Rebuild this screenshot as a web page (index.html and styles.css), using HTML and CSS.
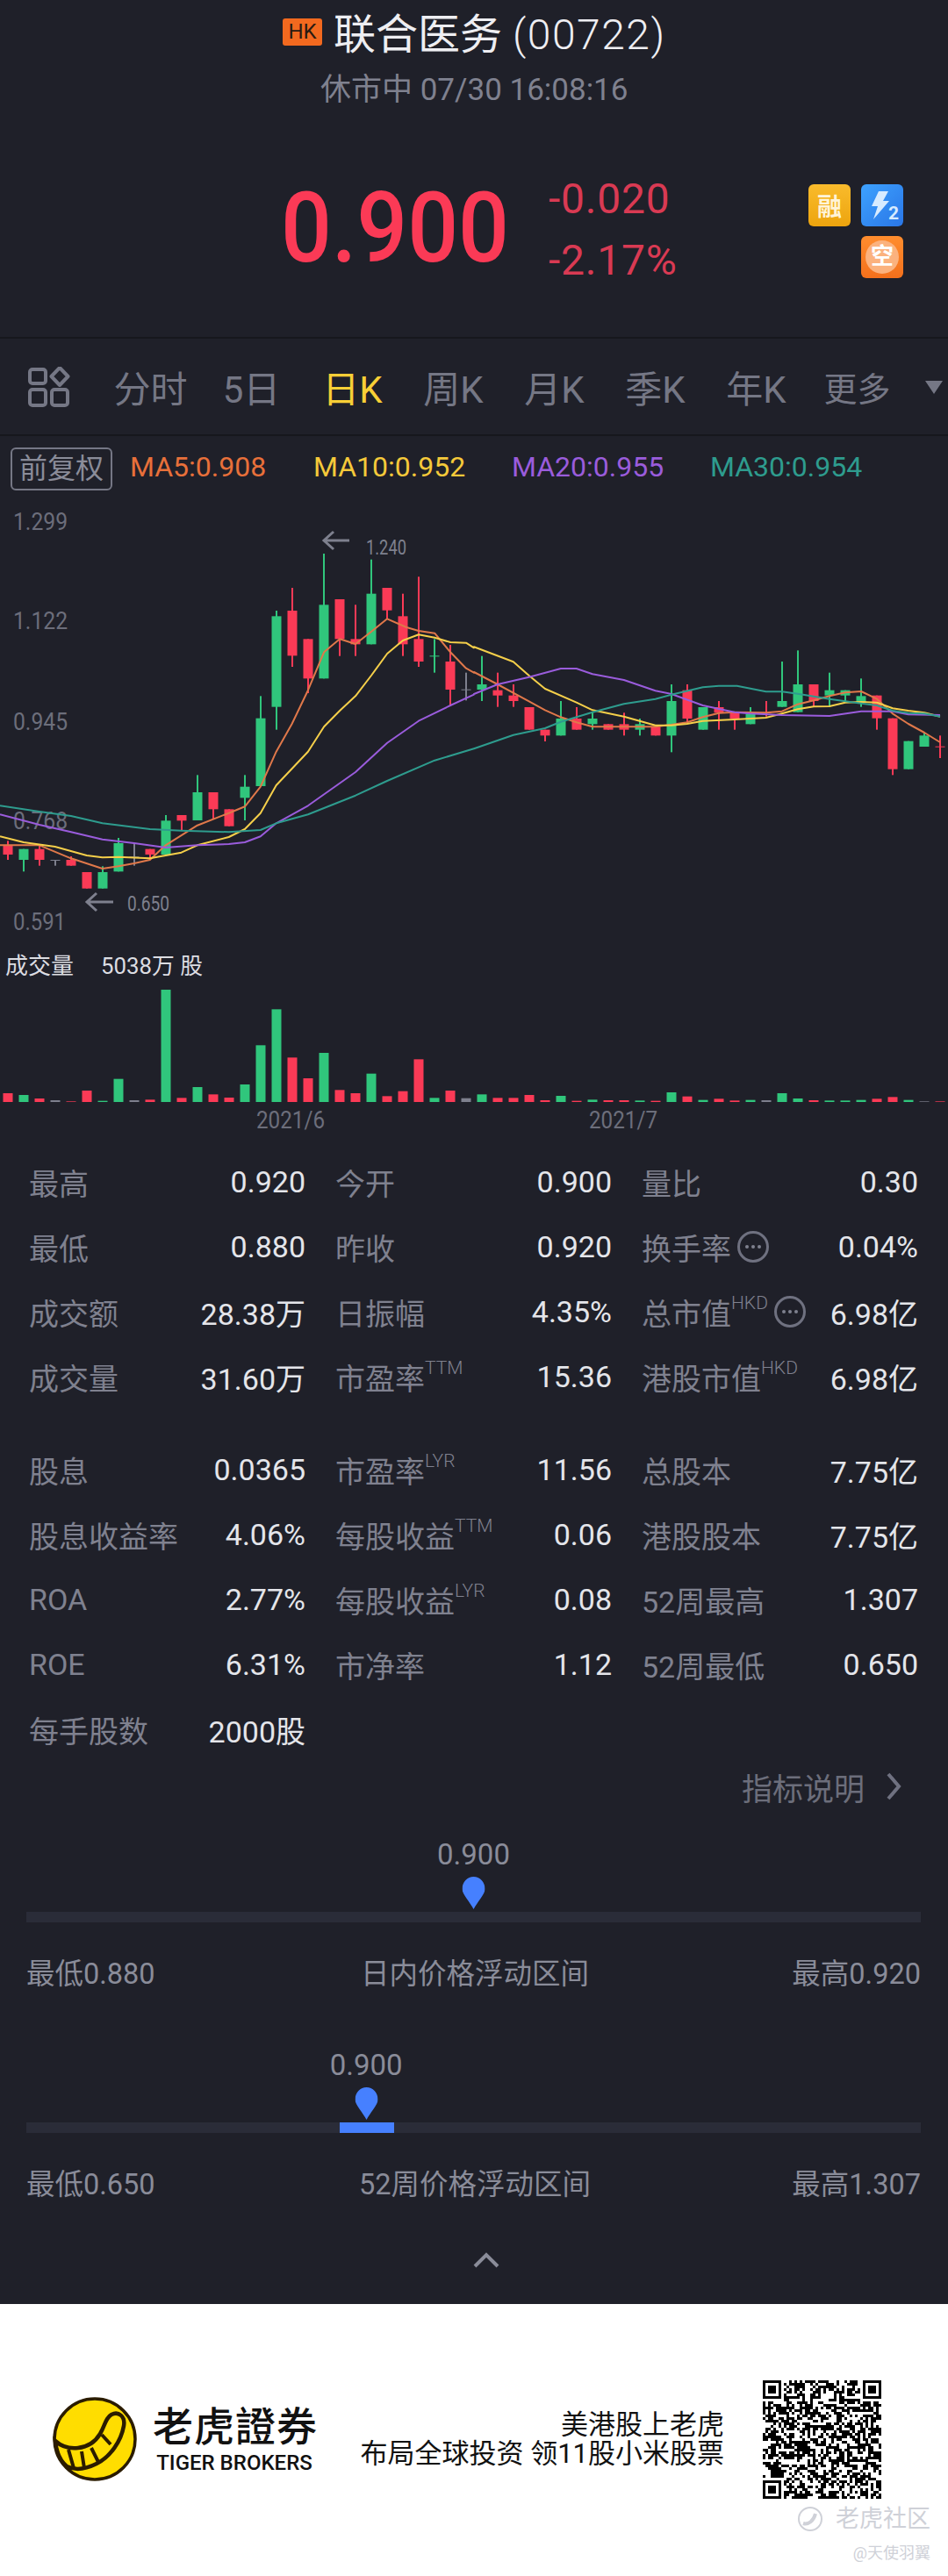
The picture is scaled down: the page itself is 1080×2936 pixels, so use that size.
FILE: index.html
```html
<!DOCTYPE html>
<html lang="zh-CN">
<head>
  <meta charset="UTF-8">
  <meta name="viewport" content="width=device-width, initial-scale=1.0">
  <title>联合医务 (00722)</title>
  <link rel="stylesheet" href="styles.css">
</head>
<body>
  <div class="quote">
    <div class="title-row">
      <span class="market">HK</span>
      <span class="title">联合医务 <span class="title-code">(00722)</span></span>
    </div>
    <div class="status">休市中 07/30 16:08:16</div>
    <div class="price-row">
      <div class="price"><span>0.900</span></div>
      <div class="change">
        <div>-0.020</div>
        <div>-2.17%</div>
      </div>
      <div class="badges">
        <span class="badge badge-rong">融</span>
        <span class="badge badge-blue">
          <svg width="48" height="48" viewBox="0 0 48 48">
            <path d="M20 8h11l-6 11h7L14 40l5-15h-7z" fill="#d7ebff"/>
            <text x="31" y="40" class="badge-two">2</text>
          </svg>
        </span>
        <span class="badge-blank"></span>
        <span class="badge badge-short"><span class="short-ring">空</span></span>
      </div>
    </div>
  </div>

  <div class="tabs">
    <div class="tabs-icon">
      <svg width="48" height="46" viewBox="0 0 48 46" fill="none" stroke="#757785" stroke-width="4">
        <rect x="2" y="3" width="18" height="16" rx="3"/>
        <path d="M36 1l9.500 10L36 21l-9.500-10z" stroke-linejoin="round"/>
        <rect x="2" y="26" width="18" height="18" rx="3"/>
        <rect x="27" y="26" width="18" height="18" rx="3"/>
      </svg>
    </div>
    <div class="tab">分时</div>
    <div class="tab">5日</div>
    <div class="tab tab-on">日K</div>
    <div class="tab">周K</div>
    <div class="tab">月K</div>
    <div class="tab">季K</div>
    <div class="tab">年K</div>
    <div class="tab tab-more">更多</div>
    <div class="tab-caret"></div>
  </div>

  <div class="ma-row">
    <span class="adjust">前复权</span>
    <span class="ma ma5">MA5:0.908</span>
    <span class="ma ma10">MA10:0.952</span>
    <span class="ma ma20">MA20:0.955</span>
    <span class="ma ma30">MA30:0.954</span>
  </div>

  <svg class="chart" width="1080" height="750" viewBox="0 0 1080 750">
    <g class="axis">
      <text x="15" y="44" textLength="62" lengthAdjust="spacingAndGlyphs">1.299</text>
      <text x="15" y="157" textLength="62" lengthAdjust="spacingAndGlyphs">1.122</text>
      <text x="15" y="272" textLength="62" lengthAdjust="spacingAndGlyphs">0.945</text>
      <text x="15" y="385" textLength="62" lengthAdjust="spacingAndGlyphs">0.768</text>
      <text x="15" y="500" textLength="60" lengthAdjust="spacingAndGlyphs">0.591</text>
    </g>
    <g id="candles"></g>
    <g id="lines" fill="none" stroke-width="2"></g>
    <g class="peak">
      <path d="M398 56H369M380 46l-11 10 11 10"/>
      <path d="M129 468H99M110 458l-11 10 11 10"/>
    </g>
    <text x="417" y="72" class="peak-label" textLength="46" lengthAdjust="spacingAndGlyphs">1.240</text>
    <text x="145" y="478" class="peak-label" textLength="48" lengthAdjust="spacingAndGlyphs">0.650</text>
    <text x="6" y="550" class="vol-label">成交量</text>
    <text x="115" y="550" class="vol-label" textLength="116" lengthAdjust="spacingAndGlyphs">5038万 股</text>
    <g id="volume"></g>
    <text x="292" y="726" class="date" textLength="78" lengthAdjust="spacingAndGlyphs">2021/6</text>
    <text x="671" y="726" class="date" textLength="78" lengthAdjust="spacingAndGlyphs">2021/7</text>
  </svg>

  <div class="stats">
    <div class="cell"><span class="lbl">最高</span><span class="val">0.920</span></div>
    <div class="cell"><span class="lbl">今开</span><span class="val">0.900</span></div>
    <div class="cell"><span class="lbl">量比</span><span class="val">0.30</span></div>
    <div class="cell"><span class="lbl">最低</span><span class="val">0.880</span></div>
    <div class="cell"><span class="lbl">昨收</span><span class="val">0.920</span></div>
    <div class="cell"><span class="lbl">换手率<i class="more"></i></span><span class="val">0.04%</span></div>
    <div class="cell"><span class="lbl">成交额</span><span class="val">28.38万</span></div>
    <div class="cell"><span class="lbl">日振幅</span><span class="val">4.35%</span></div>
    <div class="cell"><span class="lbl">总市值<sup>HKD</sup><i class="more"></i></span><span class="val">6.98亿</span></div>
    <div class="cell"><span class="lbl">成交量</span><span class="val">31.60万</span></div>
    <div class="cell"><span class="lbl">市盈率<sup>TTM</sup></span><span class="val">15.36</span></div>
    <div class="cell"><span class="lbl">港股市值<sup>HKD</sup></span><span class="val">6.98亿</span></div>
  </div>
  <div class="stats stats-second">
    <div class="cell"><span class="lbl">股息</span><span class="val">0.0365</span></div>
    <div class="cell"><span class="lbl">市盈率<sup>LYR</sup></span><span class="val">11.56</span></div>
    <div class="cell"><span class="lbl">总股本</span><span class="val">7.75亿</span></div>
    <div class="cell"><span class="lbl">股息收益率</span><span class="val">4.06%</span></div>
    <div class="cell"><span class="lbl">每股收益<sup>TTM</sup></span><span class="val">0.06</span></div>
    <div class="cell"><span class="lbl">港股股本</span><span class="val">7.75亿</span></div>
    <div class="cell"><span class="lbl">ROA</span><span class="val">2.77%</span></div>
    <div class="cell"><span class="lbl">每股收益<sup>LYR</sup></span><span class="val">0.08</span></div>
    <div class="cell"><span class="lbl">52周最高</span><span class="val">1.307</span></div>
    <div class="cell"><span class="lbl">ROE</span><span class="val">6.31%</span></div>
    <div class="cell"><span class="lbl">市净率</span><span class="val">1.12</span></div>
    <div class="cell"><span class="lbl">52周最低</span><span class="val">0.650</span></div>
    <div class="cell"><span class="lbl">每手股数</span><span class="val">2000股</span></div>
  </div>

  <div class="explain">
    <span>指标说明</span>
    <svg width="18" height="34" viewBox="0 0 18 34" fill="none" stroke="#6f7180" stroke-width="4"><path d="M3 3l12 14L3 31"/></svg>
  </div>

  <div class="range">
    <div class="range-marker">
      <div class="range-now" style="left: 50%">
        <span>0.900</span>
        <svg width="26" height="37" viewBox="0 0 26 37"><path d="M13 0c7 0 13 6 13 14 0 6-9 15-13 23C9 29 0 20 0 14 0 6 6 0 13 0z" fill="#4680ff"/></svg>
      </div>
    </div>
    <div class="range-track"></div>
    <div class="range-labels"><span>最低0.880</span><span class="range-name">日内价格浮动区间</span><span>最高0.920</span></div>
  </div>

  <div class="range">
    <div class="range-marker">
      <div class="range-now" style="left: 38%">
        <span>0.900</span>
        <svg width="26" height="37" viewBox="0 0 26 37"><path d="M13 0c7 0 13 6 13 14 0 6-9 15-13 23C9 29 0 20 0 14 0 6 6 0 13 0z" fill="#4680ff"/></svg>
      </div>
    </div>
    <div class="range-track"><div class="range-fill" style="left: 35%; width: 6.100%"></div></div>
    <div class="range-labels"><span>最低0.650</span><span class="range-name">52周价格浮动区间</span><span>最高1.307</span></div>
  </div>

  <div class="collapse">
    <svg width="30" height="18" viewBox="0 0 30 18" fill="none" stroke="#8a8c99" stroke-width="4"><path d="M2 16L15 3l13 13"/></svg>
  </div>

  <div class="promo">
    <svg class="logo" width="96" height="96" viewBox="0 0 96 96">
      <circle cx="48" cy="48" r="46" fill="#ffdd00" stroke="#2b1c00" stroke-width="3.500"/>
      <path d="M3 50C16 62 42 62 54 42 60 32 60 24 67 20c8-4 16 2 14 13C78 50 66 68 50 76 38 82 26 84 16 79 8 72 4 62 3 50z" fill="#ffdd00" stroke="#2b1c00" stroke-width="4.500"/>
      <path d="M18 60l6 21M33 62l3 19M44 58l9 18M56 43l10 11" stroke="#2b1c00" stroke-width="4" fill="none"/>
    </svg>
    <div class="brand">
      <div class="brand-cn">老虎證券</div>
      <div class="brand-en">TIGER BROKERS</div>
    </div>
    <div class="promo-text">
      <div>美港股上老虎</div>
      <div>布局全球投资 领11股小米股票</div>
    </div>
    <svg id="qr" class="qr" width="135" height="135" viewBox="0 0 45 45" shape-rendering="crispEdges"></svg>
    <div class="watermark">
      <div class="wm-main">
        <svg width="30" height="32" viewBox="0 0 30 32" fill="none" stroke="#cfd1d8" stroke-width="2"><circle cx="15" cy="16" r="13"/><path d="M7 21c6 2 12-3 14-11" stroke-width="4"/></svg>
        <span>老虎社区</span>
      </div>
      <div class="wm-user">@天使羽翼</div>
    </div>
  </div>

  <script src="chart.js"></script>
</body>
</html>
```

FILE: styles.css
```css
* {
  box-sizing: border-box;
}
body {
  margin: 0;
  width: 1080px;
  background-color: #1f2029;
  color: #e4e5ea;
  font-family: Roboto, "Noto Sans CJK SC", sans-serif;
}

/* quote header */
.quote {
  height: 386px;
  border-bottom: 2px solid #16171d;
  padding-top: 10px;
}
.title-row {
  display: flex;
  align-items: center;
  height: 60px;
  padding-left: 322px;
}
.market {
  width: 45px;
  height: 31px;
  margin-top: -8px;
  margin-right: 13px;
  border-radius: 3px;
  background-color: #f2691f;
  color: #2a1a12;
  font-size: 24px;
  line-height: 31px;
  text-align: center;
}
.title {
  color: #eeeef2;
  font-size: 48px;
  line-height: 60px;
}
.title-code {
  font-weight: 300;
  letter-spacing: 1.500px;
}
.status {
  height: 66px;
  color: #7f818f;
  font-size: 35px;
  line-height: 66px;
  padding-left: 365px;
}
.price-row {
  display: flex;
  margin-top: 51px;
  height: 146px;
  padding-left: 320px;
  padding-right: 51px;
}
.price {
  width: 305px;
  color: #fb3a56;
  font-size: 112px;
  font-weight: 500;
  line-height: 146px;
}
.price span {
  display: inline-block;
  transform: scaleX(0.91);
  transform-origin: left center;
}
.change {
  margin-top: 5px;
  color: #d93a53;
  font-size: 48px;
  line-height: 70px;
  letter-spacing: 0.800px;
}
.badges {
  display: grid;
  grid-template-columns: 48px 48px;
  grid-auto-rows: 48px;
  gap: 11px 12px;
  margin-left: auto;
  margin-top: 23px;
}
.badge {
  display: flex;
  align-items: center;
  justify-content: center;
  border-radius: 6px;
}
.badge-rong {
  background: linear-gradient(#f9bb2c, #eda40e);
  color: #fff4d8;
  font-size: 28px;
  font-weight: 700;
}
.badge-blue {
  background: linear-gradient(135deg, #3da2ff, #2a76e6);
}
.badge-two {
  fill: #d7ebff;
  font-size: 21px;
  font-weight: 700;
}
.badge-short {
  background: linear-gradient(#ff8d2e, #f3701c);
}
.short-ring {
  width: 38px;
  height: 38px;
  border-radius: 50%;
  background-color: #fbb27e;
  color: #fff;
  font-size: 26px;
  font-weight: 700;
  line-height: 37px;
  text-align: center;
}

/* period tabs */
.tabs {
  display: flex;
  align-items: center;
  height: 111px;
  border-bottom: 2px solid #16171d;
}
.tabs-icon {
  width: 114px;
  padding-left: 32px;
  line-height: 0;
}
.tab {
  width: 115px;
  color: #757785;
  font-size: 42px;
  text-align: center;
}
.tab-more {
  font-size: 38px;
}
.tab-on {
  color: #f8cf36;
}
.tab-caret {
  width: 0;
  height: 0;
  margin-left: 20px;
  margin-top: 2px;
  border-left: 10px solid transparent;
  border-right: 10px solid transparent;
  border-top: 15px solid #757785;
}

/* moving average legend */
.ma-row {
  display: flex;
  align-items: center;
  height: 63px;
  padding-left: 12px;
  padding-top: 11px;
}
.adjust {
  width: 116px;
  height: 49px;
  margin-right: 20px;
  border: 2px solid #757785;
  border-radius: 6px;
  color: #8a8c99;
  font-size: 32px;
  line-height: 44px;
  text-align: center;
}
.ma {
  width: 226px;
  margin-bottom: 5px;
  font-size: 32px;
}
.ma5 { width: 209px; color: #e8703a; }
.ma10 { color: #f5c93a; }
.ma20 { color: #9a5cdc; }
.ma30 { color: #2e9c8e; }

/* kline chart */
.chart {
  display: block;
}
.axis text {
  fill: #6c6e7b;
  font-size: 28px;
}
.peak {
  fill: none;
  stroke: #7e808e;
  stroke-width: 3;
}
.peak-label {
  fill: #7e808e;
  font-size: 23px;
}
.vol-label {
  fill: #dcdde2;
  font-size: 26px;
}
.date {
  fill: #6c6e7b;
  font-size: 28px;
}

/* stats tables */
.stats {
  display: grid;
  grid-template-columns: 315px 315px 315px;
  grid-auto-rows: 74px;
  column-gap: 34px;
  padding-left: 33px;
}
.stats-second {
  margin-top: 32px;
}
.cell {
  display: flex;
  align-items: center;
  justify-content: space-between;
}
.lbl {
  display: flex;
  align-items: center;
  color: #7f818f;
  font-size: 34px;
}
.lbl sup {
  align-self: flex-start;
  margin-top: 2px;
  font-size: 21px;
  line-height: 24px;
  font-weight: 300;
}
.val {
  color: #e4e5ea;
  font-size: 34px;
}
.more {
  position: relative;
  width: 36px;
  height: 36px;
  margin-left: 7px;
  border: 3px solid #6f7180;
  border-radius: 50%;
}
.more::after {
  content: "";
  position: absolute;
  left: 6px;
  top: 13px;
  width: 4px;
  height: 4px;
  border-radius: 50%;
  background-color: #7f818f;
  box-shadow: 7px 0 #7f818f, 14px 0 #7f818f;
}
.explain {
  display: flex;
  align-items: center;
  justify-content: flex-end;
  gap: 24px;
  height: 58px;
  padding-right: 53px;
  padding-bottom: 2px;
  color: #6c6e7b;
  font-size: 35px;
}

/* price ranges */
.range {
  height: 240px;
  padding: 0 31px 0 30px;
}
.range-marker {
  position: relative;
  height: 113px;
}
.range-now {
  position: absolute;
  bottom: 3px;
  display: flex;
  flex-direction: column;
  align-items: center;
  gap: 7px;
  transform: translateX(-50%);
  color: #8a8c99;
  font-size: 33px;
  line-height: 37px;
}
.range-now svg {
  display: block;
}
.range-track {
  position: relative;
  height: 12px;
  background-color: #2a2c38;
}
.range-fill {
  position: absolute;
  top: 0;
  bottom: 0;
  background-color: #4680ff;
}
.range-labels {
  display: flex;
  justify-content: space-between;
  margin-top: 37px;
  color: #8a8c99;
  font-size: 32.500px;
  line-height: 44px;
}
.range-name {
  margin-left: 3px;
}
.collapse {
  display: flex;
  justify-content: center;
  height: 80px;
  padding-top: 21px;
  padding-left: 28px;
}

/* bottom promo */
.promo {
  position: relative;
  display: flex;
  align-items: center;
  height: 310px;
  padding: 87px 76px 89px 60px;
  background-color: #fff;
  color: #111;
}
.logo {
  flex: none;
}
.brand {
  margin-left: 18px;
  text-align: center;
}
.brand-cn {
  font-size: 46px;
  line-height: 54px;
  font-weight: 500;
  letter-spacing: 1px;
}
.brand-en {
  margin-right: 2px;
  font-size: 24px;
  line-height: 28px;
  font-weight: 500;
}
.promo-text {
  margin-left: auto;
  margin-right: 44px;
  font-size: 31px;
  line-height: 33px;
  text-align: right;
}
.qr {
  flex: none;
}
.watermark {
  position: absolute;
  right: 20px;
  bottom: 14px;
  text-align: right;
  color: #cfd1d8;
}
.wm-main {
  display: flex;
  align-items: center;
  gap: 14px;
  font-size: 27px;
  line-height: 34px;
}
.wm-user {
  margin-top: 10px;
  font-size: 18px;
  line-height: 24px;
}
```

FILE: chart.js
```js
// all chart numbers are read off the screenshot at 3x zoom
const GREEN = '#30c67c';
const RED = '#fb3a56';
const GREY = '#7e808e';
const COLORS = { g: GREEN, r: RED, n: GREY };

// [color, high, bodyTop, bodyBottom, low]
const candles = [
  ['r',1135,1150,1182,1200],['g',1163,1163,1200,1240],['r',1150,1163,1200,1220],['n',1200,1200,1203,1220],
  ['r',1188,1200,1220,1220],['r',1242,1242,1298,1298],['g',1222,1242,1298,1298],['g',1125,1143,1240,1240],
  ['n',1143,1189,1192,1220],['r',1163,1163,1182,1200],['g',1047,1066,1182,1182],['r',1047,1047,1066,1100],
  ['g',910,969,1065,1065],['r',969,969,1027,1060],['r',1027,1027,1085,1085],['g',910,950,988,1065],
  ['g',640,716,948,948],['g',348,367,677,755],['r',270,348,502,540],['r',445,445,580,630],
  ['g',153,328,580,580],['r',309,309,445,503],['r',328,445,463,503],['g',173,290,463,463],
  ['r',270,270,347,378],['r',290,367,463,503],['r',232,445,522,540],['g',445,502,505,560],
  ['r',465,522,618,675],['n',560,617,620,655],
  ['g',503,600,618,657],['r',560,620,638,677],['r',600,638,657,677],['r',678,678,755,755],
  ['r',755,755,775,795],['g',657,717,775,775],['r',678,717,755,755],['g',695,717,736,755],
  ['r',736,736,755,755],['r',697,736,755,775],['g',717,736,755,775],['r',745,745,775,775],
  ['g',600,657,775,832],['r',600,620,717,730],['g',678,678,755,755],['r',657,678,697,755],
  ['r',697,697,717,755],['g',678,700,736,736],['r',657,696,699,710],['g',522,657,677,677],
  ['g',484,600,695,695],['r',600,600,657,677],['g',560,620,638,677],['g',620,620,638,657],
  ['g',580,640,660,677],['r',638,638,716,755],['r',716,716,890,910],['g',794,794,890,890],
  ['g',765,775,813,813],['r',775,812,815,852]
];

// [color, top of the bar in the 3x crop]
const volume = [
  ['r',552],['g',558],['r',570],['n',576],['r',580],['r',543],['g',578],['g',503],['n',576],['r',574],
  ['g',198],['r',568],['g',531],['r',556],['r',567],['g',522],['g',388],['g',265],['r',430],['r',501],
  ['g',414],['r',541],['r',552],['g',485],['r',562],['r',545],['r',436],['g',568],['r',543],['n',569],
  ['g',556],['r',568],['r',568],['r',558],['r',576],['g',561],['r',578],['g',574],['r',576],['r',576],
  ['g',577],['r',578],['g',549],['r',563],['g',575],['r',571],['r',577],['g',575],['n',576],['g',552],
  ['g',570],['r',576],['g',577],['g',577],['g',575],['r',571],['r',565],['g',575],['n',580],['r',580]
];

// left half and right half of each line, in crop coordinates
const lines = [
  { color: '#e0784a',
    left: [0,1150,130,1150,235,1195,339,1230,392,1222,444,1212,496,1200,548,1150,653,1082,757,1040,810,1018,862,950,914,830,966,735,1019,620,1072,490,1124,445,1176,462,1228,420,1281,376,1345,405,1385,417,1438,425,1490,490,1542,545,1568,560],
    right: [0,558,78,600,182,658,235,688,287,712,339,730,392,745,496,745,600,745,653,738,705,730,757,712,810,698,862,695,966,697,1019,692,1071,668,1124,655,1176,640,1228,628,1281,624,1333,650,1385,700,1437,735,1490,765,1542,798] },
  { color: '#f5cf4a',
    left: [0,1120,78,1140,182,1155,287,1185,339,1192,392,1190,496,1195,548,1185,600,1175,653,1150,757,1122,810,1095,862,1040,914,945,1019,830,1072,745,1124,690,1176,640,1228,570,1281,495,1333,450,1385,430,1438,440,1490,456,1542,458,1568,475],
    right: [0,472,130,523,182,570,235,615,339,662,392,688,496,710,600,740,653,740,705,735,757,725,862,720,966,714,1019,700,1071,685,1124,676,1176,675,1228,662,1281,660,1333,662,1385,682,1437,690,1490,697,1542,710] },
  { color: '#9a5cdc',
    left: [0,1045,130,1080,235,1105,339,1130,444,1143,548,1158,653,1150,757,1146,810,1140,862,1120,914,1075,1019,1015,1176,900,1281,800,1385,725,1490,672,1568,635],
    right: [0,633,78,600,182,575,287,546,339,546,392,565,496,585,600,622,653,633,757,672,862,695,914,700,1019,705,1176,708,1281,692,1385,692,1437,703,1542,705] },
  { color: '#2e9c8e',
    left: [0,1015,130,1035,235,1050,339,1075,496,1095,600,1100,757,1105,862,1098,914,1075,1019,1045,1176,980,1281,930,1438,860,1568,820],
    right: [0,820,130,773,235,750,287,728,392,695,496,667,600,650,653,635,757,610,810,605,870,605,966,625,1019,625,1071,632,1176,650,1281,665,1333,672,1385,690,1437,698,1490,700,1542,710] }
];

function chartY(z) {
  return z / 3 + 20;
}

function drawCandles() {
  let html = '';
  candles.forEach(function (c, i) {
    const x = 9 + 18 * i;
    const color = COLORS[c[0]];
    html += '<rect x="' + (x - 1) + '" y="' + chartY(c[1]) + '" width="2" height="' + (c[4] - c[1]) / 3 + '" fill="' + color + '"/>';
    html += '<rect x="' + (x - 5.5) + '" y="' + chartY(c[2]) + '" width="11" height="' + (c[3] - c[2]) / 3 + '" fill="' + color + '"/>';
  });
  document.getElementById('candles').innerHTML = html;
}

function drawLines() {
  let html = '';
  lines.forEach(function (line) {
    let points = [];
    for (let i = 0; i < line.left.length; i += 2) {
      points.push((line.left[i] / 2.904).toFixed(1) + ',' + chartY(line.left[i + 1]).toFixed(1));
    }
    for (let i = 0; i < line.right.length; i += 2) {
      points.push((line.right[i] / 2.904 + 540).toFixed(1) + ',' + chartY(line.right[i + 1]).toFixed(1));
    }
    html += '<polyline points="' + points.join(' ') + '" stroke="' + line.color + '" stroke-linejoin="round"/>';
  });
  document.getElementById('lines').innerHTML = html;
}

function drawVolume() {
  // baseline of the bars is y=1254 on the page, chart starts at 558
  let html = '';
  volume.forEach(function (v, i) {
    const h = (582 - v[1]) / 3;
    html += '<rect x="' + (3.5 + 18 * i) + '" y="' + (696 - h) + '" width="11" height="' + h + '" fill="' + COLORS[v[0]] + '"/>';
  });
  document.getElementById('volume').innerHTML = html;
}

function drawQr() {
  const size = 45;
  let seed = 722;
  let d = '';
  function inFinder(x, y) {
    return (x < 8 && y < 8) || (x >= size - 8 && y < 8) || (x < 8 && y >= size - 8);
  }
  for (let y = 0; y < size; y++) {
    for (let x = 0; x < size; x++) {
      seed = (seed * 1103515245 + 12345) & 0x7fffffff;
      if (!inFinder(x, y) && (seed >> 16) % 100 < 52) {
        d += 'M' + x + ' ' + y + 'h1v1h-1z';
      }
    }
  }
  [[0, 0], [size - 7, 0], [0, size - 7]].forEach(function (p) {
    d += 'M' + p[0] + ' ' + p[1] + 'h7v7h-7zM' + (p[0] + 1) + ' ' + (p[1] + 1) + 'v5h5v-5z';
    d += 'M' + (p[0] + 2) + ' ' + (p[1] + 2) + 'h3v3h-3z';
  });
  document.getElementById('qr').innerHTML = '<path d="' + d + '" fill="#000" fill-rule="evenodd"/>';
}

drawCandles();
drawLines();
drawVolume();
drawQr();
```
